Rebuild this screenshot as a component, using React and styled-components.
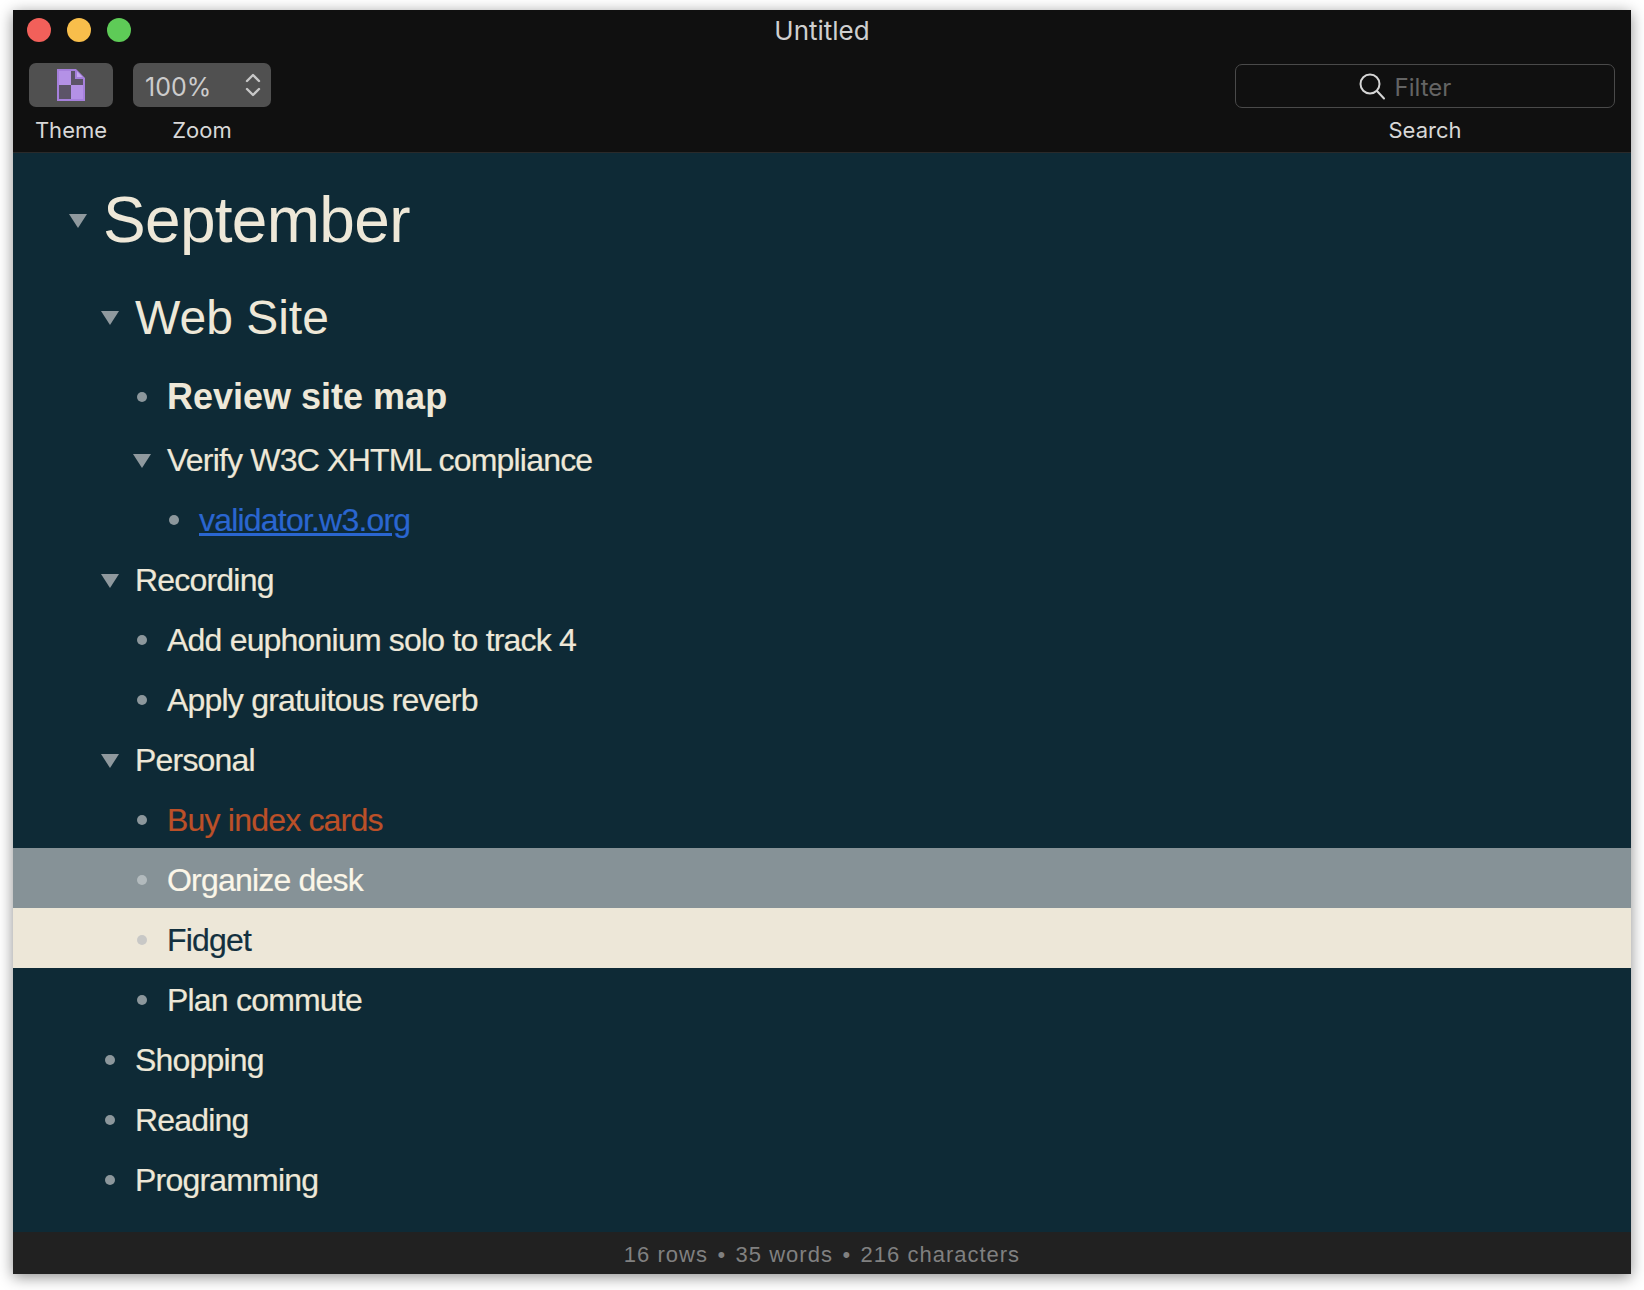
import React from 'react'
import styled, { createGlobalStyle } from 'styled-components'

const Global = createGlobalStyle`
  html, body {
    margin: 0;
    padding: 0;
    background: #fff;
  }
`

const uiFont = `Inter, "Liberation Sans", sans-serif`
const bodyFont = `"Liberation Sans", Arial, sans-serif`

const rows = [
    { text: 'September', level: 0, kind: 'h1', open: true },
    { text: 'Web Site', level: 1, kind: 'h2', open: true },
    { text: 'Review site map', level: 2, kind: 'bold' },
    { text: 'Verify W3C XHTML compliance', level: 2, open: true },
    { text: 'validator.w3.org', level: 3, link: true },
    { text: 'Recording', level: 1, open: true },
    { text: 'Add euphonium solo to track 4', level: 2 },
    { text: 'Apply gratuitous reverb', level: 2 },
    { text: 'Personal', level: 1, open: true },
    { text: 'Buy index cards', level: 2, tone: 'orange' },
    { text: 'Organize desk', level: 2, state: 'hover' },
    { text: 'Fidget', level: 2, state: 'selected' },
    { text: 'Plan commute', level: 2 },
    { text: 'Shopping', level: 1 },
    { text: 'Reading', level: 1 },
    { text: 'Programming', level: 1 },
]

const rowHeights = { h1: 108, h2: 86, bold: 70 }
const fontSizes = { h1: 64, h2: 48, bold: 36 }
const tracking = { h1: -0.7, h2: 0, bold: 0 }

const ThemeIcon = () => (
    <svg width="28" height="32" viewBox="0 0 28 32">
        <path d="M0 0H19L28 9V32H0Z" fill="#a680dc" />
        <rect x="2" y="2" width="12" height="14" fill="#b491e6" />
        <path d="M14 2H18V10H26V16H14Z" fill="#5c5468" />
        <rect x="2" y="16" width="12" height="14" fill="#5c5468" />
        <rect x="14" y="16" width="12" height="14" fill="#b491e6" />
        <path d="M20 2.5L25.5 8H20Z" fill="#c4a8ee" />
    </svg>
)

const Stepper = () => (
    <svg width="16" height="26" viewBox="0 0 16 26" fill="none" stroke="#c8c8c8" strokeWidth="2.4" strokeLinecap="round" strokeLinejoin="round">
        <path d="M2 9L8 3L14 9" />
        <path d="M2 17L8 23L14 17" />
    </svg>
)

const SearchIcon = () => (
    <svg width="26" height="27" viewBox="0 0 26 27" fill="none" stroke="#d6d6d6" strokeWidth="2" strokeLinecap="round">
        <circle cx="11" cy="11" r="9.5" />
        <path d="M18 18L25 25.5" />
    </svg>
)

const App = () => {
    return (
        <Page>
            <Global />
            <Window>
                <Header>
                    <TitleRow>
                        <Lights>
                            <Light color="#f2605a" />
                            <Light color="#f8be4b" />
                            <Light color="#5ecb57" />
                        </Lights>
                        <Title>Untitled</Title>
                    </TitleRow>
                    <Toolbar>
                        <ToolGroup>
                            <Tool>
                                <ThemeButton><ThemeIcon /></ThemeButton>
                                <ToolLabel>Theme</ToolLabel>
                            </Tool>
                            <Tool>
                                <ZoomButton>
                                    <ZoomValue>100%</ZoomValue>
                                    <Stepper />
                                </ZoomButton>
                                <ToolLabel>Zoom</ToolLabel>
                            </Tool>
                        </ToolGroup>
                        <Tool>
                            <SearchBox>
                                <SearchIcon />
                                <FilterText>Filter</FilterText>
                            </SearchBox>
                            <ToolLabel>Search</ToolLabel>
                        </Tool>
                    </Toolbar>
                </Header>
                <Outline>
                    {rows.map((row) => (
                        <Row key={row.text} $level={row.level} $kind={row.kind} $state={row.state}>
                            <Marker>
                                {row.open ? <Triangle /> : <Bullet $state={row.state} />}
                            </Marker>
                            <RowText $kind={row.kind} $tone={row.tone} $state={row.state} $link={row.link}>
                                {row.text}
                            </RowText>
                        </Row>
                    ))}
                </Outline>
                <StatusBar>
                    16 rows<StatusDot>•</StatusDot>35 words<StatusDot>•</StatusDot>216 characters
                </StatusBar>
            </Window>
        </Page>
    )
}

export default App

const Page = styled.div`
    box-sizing: border-box;
    width: 1644px;
    height: 1290px;
    padding: 10px 13px 16px;
    background: #fff;
    overflow: hidden;
`
const Window = styled.div`
    display: flex;
    flex-direction: column;
    height: 1264px;
    background: #0e2a36;
    box-shadow: 0 3px 14px rgba(0, 0, 0, 0.45);
`
const Header = styled.header`
    display: flex;
    flex-direction: column;
    box-sizing: border-box;
    height: 143px;
    background: #101010;
    border-bottom: 1px solid #2a2a2a;
    font-family: ${uiFont};
`
const TitleRow = styled.div`
    display: grid;
    grid-template-columns: 1fr auto 1fr;
    align-items: center;
    height: 40px;
`
const Lights = styled.div`
    display: flex;
    gap: 16px;
    padding-left: 14px;
`
const Light = styled.span`
    width: 24px;
    height: 24px;
    border-radius: 50%;
    background: ${(p) => p.color};
`
const Title = styled.div`
    color: #cfcfcf;
    font-size: 26px;
`
const Toolbar = styled.div`
    display: flex;
    justify-content: space-between;
    padding: 13px 16px 0;
`
const ToolGroup = styled.div`
    display: flex;
    gap: 20px;
`
const Tool = styled.div`
    display: flex;
    flex-direction: column;
    align-items: center;
    gap: 10px;
`
const ToolLabel = styled.div`
    color: #d8d8d8;
    font-size: 22px;
    line-height: 26px;
`
const ThemeButton = styled.div`
    display: flex;
    align-items: center;
    justify-content: center;
    width: 84px;
    height: 44px;
    border-radius: 7px;
    background: #505050;
`
const ZoomButton = styled.div`
    display: flex;
    align-items: center;
    justify-content: space-between;
    box-sizing: border-box;
    width: 138px;
    height: 44px;
    padding: 0 10px 0 12px;
    border-radius: 7px;
    background: #505050;
    color: #cccccc;
    font-size: 25px;
`
const ZoomValue = styled.span`
    padding-top: 3px;
`
const SearchBox = styled.div`
    display: flex;
    align-items: center;
    justify-content: center;
    gap: 10px;
    box-sizing: border-box;
    width: 380px;
    height: 44px;
    margin-top: 1px;
    margin-bottom: -1px;
    padding-right: 40px;
    border: 1px solid #4a4a4a;
    border-radius: 7px;
    color: #646464;
    font-size: 24px;
`
const FilterText = styled.span`
    padding-top: 3px;
`
const Outline = styled.main`
    flex: 1;
    padding-top: 11px;
    font-family: ${bodyFont};
`
const Row = styled.div`
    display: flex;
    align-items: center;
    gap: 9px;
    box-sizing: border-box;
    height: ${(p) => rowHeights[p.$kind] || 60}px;
    padding-top: ${(p) => (p.$kind === 'bold' ? 8 : 4)}px;
    padding-left: ${(p) => 49 + p.$level * 32}px;
    background: ${(p) => p.$state === 'hover' ? '#869297' : p.$state === 'selected' ? '#ede7d8' : 'transparent'};
`
const Marker = styled.div`
    display: flex;
    align-items: center;
    justify-content: center;
    width: 32px;
    flex-shrink: 0;
`
const Triangle = styled.span`
    width: 0;
    height: 0;
    margin-top: 2px;
    border-left: 9px solid transparent;
    border-right: 9px solid transparent;
    border-top: 14px solid #8f999e;
`
const Bullet = styled.span`
    width: 10px;
    height: 10px;
    border-radius: 50%;
    background: ${(p) => p.$state === 'hover' ? '#b2babd' : p.$state === 'selected' ? '#c8c8c6' : '#8c979c'};
`
const RowText = styled.span`
    font-size: ${(p) => fontSizes[p.$kind] || 32}px;
    font-weight: ${(p) => p.$kind === 'bold' ? 700 : 400};
    letter-spacing: ${(p) => tracking[p.$kind] ?? -0.8}px;
    -webkit-text-stroke: ${(p) => (p.$kind ? 0 : 0.2)}px;
    color: ${(p) => {
        if (p.$link) return '#2a66d0'
        if (p.$tone === 'orange') return '#bb5028'
        if (p.$state === 'selected') return '#12303f'
        if (p.$state === 'hover') return '#fbf6e8'
        return '#eee8d8'
    }};
    text-decoration: ${(p) => p.$link ? 'underline' : 'none'};
`
const StatusBar = styled.footer`
    display: flex;
    align-items: center;
    justify-content: center;
    box-sizing: border-box;
    height: 42px;
    padding-top: 3px;
    background: #212121;
    color: #808080;
    font-family: ${bodyFont};
    font-size: 22px;
    letter-spacing: 1px;
`
const StatusDot = styled.span`
    margin: 0 9.5px;
`
